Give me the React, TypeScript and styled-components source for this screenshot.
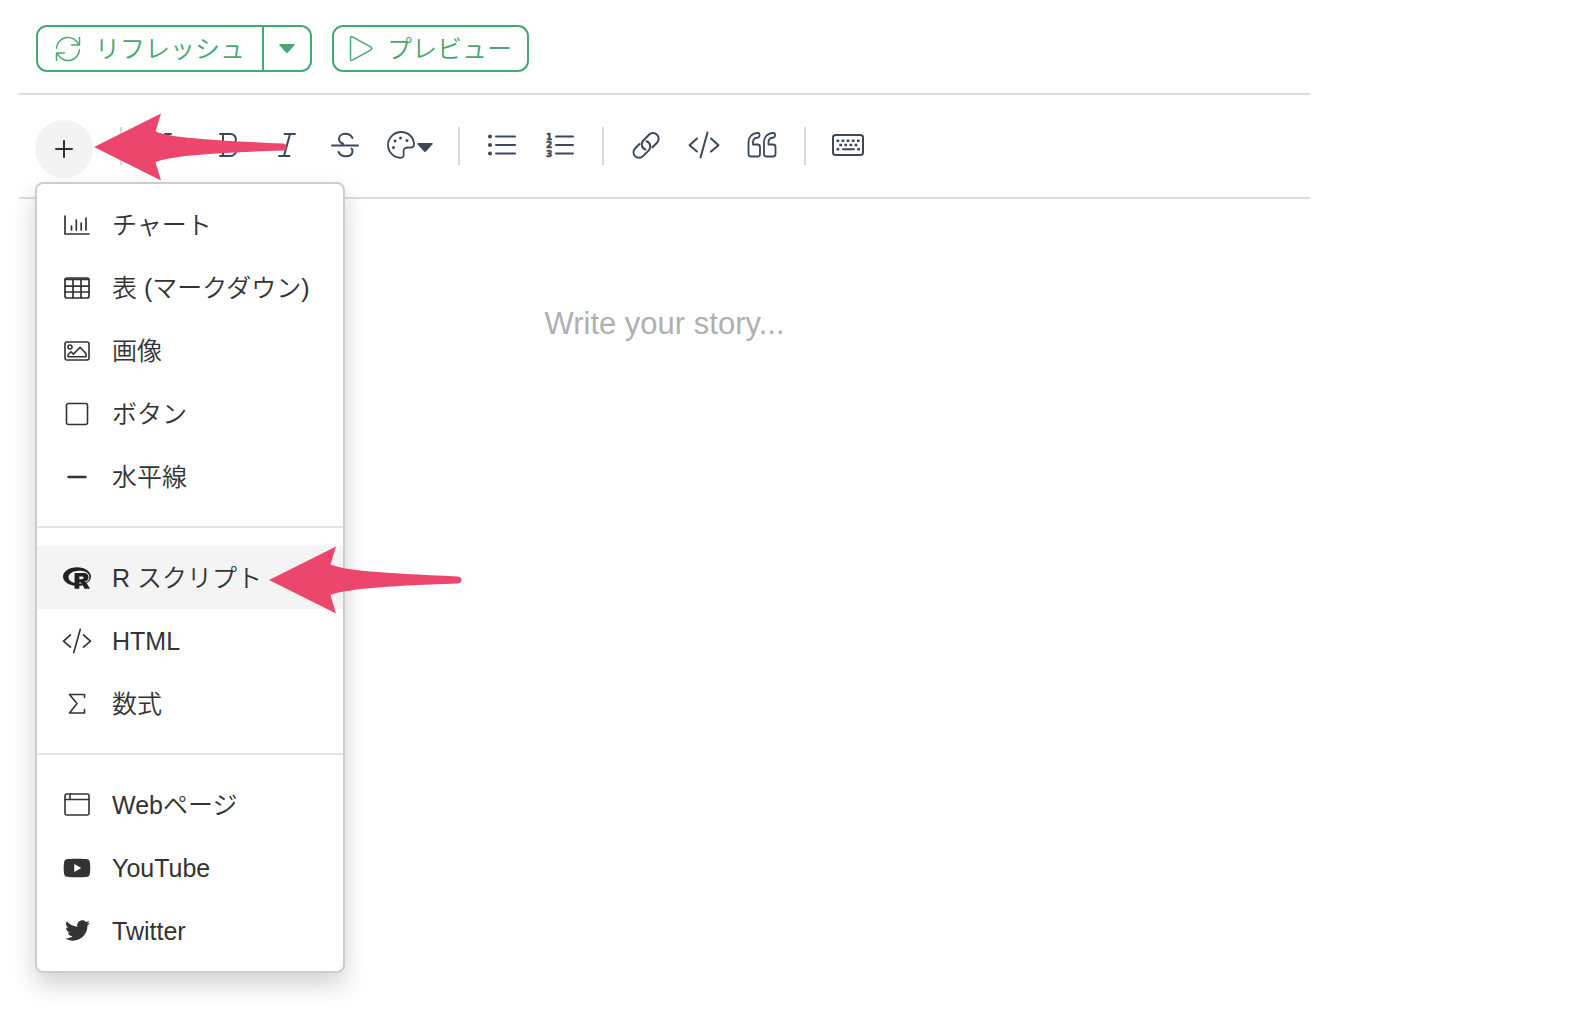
import React from "react";
import styled, { createGlobalStyle } from "styled-components";
import { FaRProject, FaYoutube, FaTwitter } from "react-icons/fa";

const GlobalStyle = createGlobalStyle`
  *, *::before, *::after { box-sizing: border-box; }
  body {
    margin: 0;
    background: #fff;
    color: #333;
    font-family: "Liberation Sans", "Noto Sans CJK JP", sans-serif;
    font-size: 25px;
    font-weight: 350;
  }
  button, textarea { font: inherit; color: inherit; }
`;

const green = "#47a871";
const ink = "#3b485a";
const line = "#dcdcdc";

const Page = styled.main`
  display: flex;
  flex-direction: column;
  min-height: 100vh;
  padding: 0 260px 0 19px;
`;

const Header = styled.header`
  display: flex;
  gap: 20px;
  padding: 25px 17px 21px;
  border-bottom: 2px solid ${line};
`;

const ButtonGroup = styled.div`
  display: flex;
`;

const OutlineButton = styled.button<{ $side?: "left" | "right" }>`
  display: flex;
  align-items: center;
  gap: 14px;
  height: 47px;
  padding: 0 ${(p) => (p.$side === "left" ? 17 : 15)}px;
  border: 2px solid ${green};
  border-left-width: ${(p) => (p.$side === "right" ? 0 : 2)}px;
  border-radius: ${(p) =>
    p.$side === "left" ? "11px 0 0 11px" : p.$side === "right" ? "0 11px 11px 0" : "11px"};
  background: transparent;
  color: ${green};
  line-height: 36px;
  white-space: nowrap;
  cursor: pointer;
`;

const Toolbar = styled.div`
  display: flex;
  align-items: flex-start;
  min-height: 104px;
  padding: 25px 16px 0;
  border-bottom: 2px solid ${line};
`;

const Insert = styled.div`
  position: relative;
  z-index: 2;
  margin-right: 14px;
`;

const InsertButton = styled.button`
  display: flex;
  align-items: center;
  justify-content: center;
  width: 58px;
  height: 58px;
  padding: 0;
  border: 0;
  border-radius: 50%;
  background: #f3f3f3;
  cursor: pointer;
`;

const ToolButton = styled.button`
  display: flex;
  align-items: center;
  justify-content: center;
  flex: none;
  width: 58px;
  height: 50px;
  padding: 0;
  border: 0;
  background: transparent;
  color: ${ink};
  cursor: pointer;
`;

const HeadingButton = styled(ToolButton)`
  width: 65px;
  padding-right: 12px;
`;

const ColorButton = styled(ToolButton)`
  gap: 2px;
  width: 71px;
`;

const CaretDrop = styled.span`
  display: flex;
  padding-top: 4px;
`;

const Separator = styled.span`
  flex: none;
  width: 2px;
  height: 38px;
  margin: 7px 13px 0;
  background: #d9d9d9;
`;

const Menu = styled.div`
  position: absolute;
  top: 62px;
  left: 0;
  width: 310px;
  padding: 9px 0;
  border: 2px solid #cdcdcd;
  border-radius: 8px;
  background: #fff;
  background-clip: padding-box;
  box-shadow: 0 12px 24px rgba(0, 0, 0, 0.175);
`;

const MenuEntry = styled.div`
  position: relative;
`;

const MenuItem = styled.button<{ $active?: boolean }>`
  display: flex;
  align-items: center;
  gap: 19px;
  width: 100%;
  height: 63px;
  padding: 0 24px;
  border: 0;
  background: ${(p) => (p.$active ? "#f4f4f4" : "transparent")};
  line-height: 36px;
  text-align: left;
  white-space: nowrap;
  cursor: pointer;
`;

const MenuIcon = styled.span`
  display: flex;
  align-items: center;
  justify-content: center;
  flex: none;
  width: 32px;
`;

const MenuDivider = styled.hr`
  height: 2px;
  margin: 18px 0;
  border: 0;
  background: #e4e4e4;
`;

const Pointer = styled.svg<{ $left: number; $top: number }>`
  position: absolute;
  left: ${(p) => p.$left}px;
  top: ${(p) => p.$top}px;
  z-index: 3;
  pointer-events: none;
`;

const Editor = styled.textarea`
  display: block;
  flex: 1;
  width: 100%;
  padding: 107px 0 0;
  border: 0;
  outline: 0;
  resize: none;
  background: transparent;
  font-size: 31px;
  line-height: 36px;
  text-align: center;
  &::placeholder { color: #b0b0b0; opacity: 1; }
`;

type IconProps = { w: number; h: number; sw?: number; children: React.ReactNode };
const Icon = ({ w, h, sw = 2, children }: IconProps) => (
  <svg
    width={w}
    height={h}
    viewBox={`0 0 ${w} ${h}`}
    fill="none"
    stroke="currentColor"
    strokeWidth={sw}
    strokeLinecap="round"
    strokeLinejoin="round"
    aria-hidden="true"
  >
    {children}
  </svg>
);

const Caret = () => (
  <svg width="16" height="9" viewBox="0 0 16 9" aria-hidden="true">
    <path d="M1 0h14q1 .5.5 1.200L9 8.500q-1 .8-2 0L.500 1.200Q0 .5 1 0z" fill="currentColor" />
  </svg>
);

const ArrowPointer = ({ left, top }: { left: number; top: number }) => (
  <Pointer $left={left} $top={top} width="194" height="68" viewBox="0 0 194 68" aria-hidden="true">
    <path
      d="M0 34 67 0.500 61.500 18.500C76 24.500 110 27 189 30.500Q192.500 31 192.500 34T189 37.500C110 40 76 43.500 61.500 49L67 67.500z"
      fill="#ec466c"
    />
  </Pointer>
);

const CodeIcon = ({ w = 32, h = 28, sw = 2 }) => (
  <svg width={w} height={h} viewBox="0 0 32 28" fill="none" stroke="currentColor" strokeWidth={sw} strokeLinecap="round" strokeLinejoin="round" aria-hidden="true">
    <path d="M9 7.500 1.500 14.200 9 20.500M23 7.500l7.500 6.700L23 20.500M19.500 1.500 12.500 26.500" />
  </svg>
);

const RefreshIcon = () => (
  <Icon w={26} h={26} sw={1.5}>
    <path d="M1.500 12.200A11.500 11.500 0 0 1 23.600 8.500M24.500 1.500v7.500h-8M24.500 13.800A11.500 11.500 0 0 1 2.400 17.500M1.500 24.500V17h8" />
  </Icon>
);

const PlayIcon = () => (
  <Icon w={24} h={27} sw={1.5}>
    <path d="M1.500 3v21q0 2.200 2 1.200L22 14.800q1.500-1.300 0-2.600L3.500 1.800Q1.500.8 1.500 3z" />
  </Icon>
);

const PlusIcon = () => (
  <Icon w={20} h={20}>
    <path d="M10 2v16M2 10h16" />
  </Icon>
);

const HeadingIcon = () => (
  <Icon w={20} h={26}>
    <path d="M1 2h6M13 2h6M1 24h6M13 24h6M4 2v22M16 2v22M4 13h12" />
  </Icon>
);

const BoldIcon = () => (
  <Icon w={20} h={26}>
    <path d="M1 2h10.500a5.300 5.300 0 0 1 0 10.800H4M11.500 12.800a5.600 5.600 0 0 1 0 11.200H1M4 2v22" />
  </Icon>
);

const ItalicIcon = () => (
  <Icon w={20} h={26}>
    <path d="M7.500 2H18M2 24h10.500M13 2 7 24" />
  </Icon>
);

const StrikeIcon = () => (
  <Icon w={28} h={26}>
    <path d="M1 13.500h26M21.500 6C20 3 17.500 1.800 14.500 1.800 10.500 1.800 8 4 8 7c0 2.600 1.500 3.800 4 4.800M7.500 20c1.500 3 4 4.200 7 4.200 4 0 7-1.700 7-5q0-2-1-2.700" />
  </Icon>
);

const PaletteIcon = () => (
  <Icon w={28} h={28} sw={1.8}>
    <path d="M14 1C7 1 1 7 1 14s5.500 12.500 12.300 12.900c2.900.1 4-2.200 3.300-4.700-.9-3.700 1.200-5.900 4.600-5.700 3.600.3 5.800-.2 5.800-3.300C26.800 6.300 21.300 1 14 1z" />
    <g fill="currentColor" stroke="none">
      <circle cx="6.500" cy="16.500" r="1.500" />
      <circle cx="8" cy="10" r="1.500" />
      <circle cx="13.500" cy="7" r="1.500" />
      <circle cx="20" cy="9.500" r="1.500" />
    </g>
  </Icon>
);

const BulletsIcon = () => (
  <Icon w={28} h={24}>
    <path d="M8 3.500h19M8 12h19M8 20.500h19" />
    <g fill="currentColor" stroke="none">
      <circle cx="2" cy="3.500" r="2" />
      <circle cx="2" cy="12" r="2" />
      <circle cx="2" cy="20.500" r="2" />
    </g>
  </Icon>
);

const NumbersIcon = () => (
  <Icon w={28} h={26}>
    <path d="M10 4.500h17M10 13h17M10 21.500h17" />
    <g fill="currentColor" strokeWidth="0.500" fontFamily="DejaVu Sans" fontWeight="700" fontSize="9">
      <text x="0" y="8">1</text>
      <text x="0" y="16">2</text>
      <text x="0" y="25">3</text>
    </g>
  </Icon>
);

const LinkIcon = () => (
  <Icon w={28} h={28}>
    <path d="M7.500 13 3 17.500a5.700 5.700 0 0 0 0 7.600a5.700 5.700 0 0 0 8 0l5.500-5.500c3-3 2-8-2-9.300" />
    <path d="M20.500 16.200l4.500-4.500a5.700 5.700 0 0 0 0-8a5.700 5.700 0 0 0-8 0l-5.500 5.500c-3 3-2 8 2 9.300" />
  </Icon>
);

const QuoteIcon = () => (
  <Icon w={30} h={26} sw={1.8}>
    <path d="M12.500 3.500V2.200Q12.300 1 11 1C5 1 1.500 5 1.500 10v12q0 2.500 2.500 2.500h6.500q2.500 0 2.500-2.500v-7q0-2.500-2.500-2.500H6V10c0-2.500 2-4.200 5-4.500q1.500-.3 1.500-2z" />
    <path d="M28 3.500V2.200Q27.800 1 26.500 1C20.500 1 17 5 17 10v12q0 2.500 2.500 2.500H26q2.500 0 2.500-2.500v-7q0-2.500-2.500-2.500h-4.500V10c0-2.500 2-4.200 5-4.500q1.500-.3 1.500-2z" />
  </Icon>
);

const KeyboardIcon = () => (
  <Icon w={32} h={22}>
    <rect x="1" y="1" width="30" height="20" rx="2.500" />
    <g strokeLinecap="butt" strokeWidth="2.500">
      <path d="M4.500 6.800h23.500" strokeDasharray="2.700 2.400" />
      <path d="M7.300 11h18" strokeDasharray="2.700 2.400" />
      <path d="M4.500 15.300h2.700M25.200 15.300h2.700" />
    </g>
    <path d="M11 15.300h11" />
  </Icon>
);

const ChartIcon = () => (
  <Icon w={26} h={20} sw={1.7}>
    <path d="M1 1v18h24M7.500 11v4M12.300 5v10M17.200 8v7M22 3v12" />
  </Icon>
);

const TableIcon = () => (
  <Icon w={26} h={22} sw={1.7}>
    <rect x="1" y="1" width="24" height="20" rx="2" />
    <path d="M1 2.300h24M1 9.200h24M1 15h24M9 2v19M17 2v19" />
  </Icon>
);

const ImageIcon = () => (
  <Icon w={26} h={20} sw={1.6}>
    <rect x="1" y="1" width="24" height="18" rx="2" />
    <circle cx="6" cy="6" r="2" />
    <path d="M4 15.800v-2l3-3 2.500 2.300 6.500-6.800 3 3 3 3.500v3z" />
  </Icon>
);

const SquareIcon = () => (
  <Icon w={24} h={24} sw={1.6}>
    <rect x="1.500" y="1.500" width="21" height="21" rx="2" />
  </Icon>
);

const MinusIcon = () => (
  <Icon w={20} h={4} sw={2.4}>
    <path d="M1.500 2h17" />
  </Icon>
);

const SigmaIcon = () => (
  <Icon w={18} h={22} sw={1.6}>
    <path d="M16.500 4.500V1.500H1.500L9 10.500 1.500 20h15v-3.500" />
  </Icon>
);

const WindowIcon = () => (
  <Icon w={26} h={23} sw={1.6}>
    <rect x="1" y="1" width="24" height="21" rx="2" />
    <path d="M1 6.500h24M6 1v5" />
  </Icon>
);

type Item = { label: string; icon: React.ReactNode; active?: boolean };

const groups: Item[][] = [
  [
    { label: "チャート", icon: <ChartIcon /> },
    { label: "表 (マークダウン)", icon: <TableIcon /> },
    { label: "画像", icon: <ImageIcon /> },
    { label: "ボタン", icon: <SquareIcon /> },
    { label: "水平線", icon: <MinusIcon /> },
  ],
  [
    { label: "R スクリプト", icon: <FaRProject size={28} color="#222" />, active: true },
    { label: "HTML", icon: <CodeIcon w={30} h={26} sw={1.8} /> },
    { label: "数式", icon: <SigmaIcon /> },
  ],
  [
    { label: "Webページ", icon: <WindowIcon /> },
    { label: "YouTube", icon: <FaYoutube size={28} /> },
    { label: "Twitter", icon: <FaTwitter size={25} /> },
  ],
];

export default function App() {
  return (
    <>
      <GlobalStyle />
      <Page>
        <Header>
          <ButtonGroup>
            <OutlineButton type="button" $side="left">
              <RefreshIcon />
              リフレッシュ
            </OutlineButton>
            <OutlineButton type="button" $side="right" aria-label="リフレッシュのオプション">
              <Caret />
            </OutlineButton>
          </ButtonGroup>
          <OutlineButton type="button">
            <PlayIcon />
            プレビュー
          </OutlineButton>
        </Header>

        <Toolbar role="toolbar">
          <Insert>
            <InsertButton type="button" aria-label="挿入" aria-haspopup="menu" aria-expanded="true">
              <PlusIcon />
            </InsertButton>
            <ArrowPointer left={59} top={-7} />
            <Menu role="menu">
              {groups.map((items, g) => (
                <React.Fragment key={g}>
                  {g > 0 && <MenuDivider />}
                  {items.map((item) => (
                    <MenuEntry key={item.label}>
                      <MenuItem type="button" role="menuitem" $active={item.active}>
                        <MenuIcon>{item.icon}</MenuIcon>
                        {item.label}
                      </MenuItem>
                      {item.active && <ArrowPointer left={232} top={0} />}
                    </MenuEntry>
                  ))}
                </React.Fragment>
              ))}
            </Menu>
          </Insert>
          <Separator />
          <HeadingButton type="button" aria-label="見出し"><HeadingIcon /></HeadingButton>
          <ToolButton type="button" aria-label="太字"><BoldIcon /></ToolButton>
          <ToolButton type="button" aria-label="斜体"><ItalicIcon /></ToolButton>
          <ToolButton type="button" aria-label="取り消し線"><StrikeIcon /></ToolButton>
          <ColorButton type="button" aria-label="文字色">
            <PaletteIcon />
            <CaretDrop><Caret /></CaretDrop>
          </ColorButton>
          <Separator />
          <ToolButton type="button" aria-label="箇条書き"><BulletsIcon /></ToolButton>
          <ToolButton type="button" aria-label="番号付きリスト"><NumbersIcon /></ToolButton>
          <Separator />
          <ToolButton type="button" aria-label="リンク"><LinkIcon /></ToolButton>
          <ToolButton type="button" aria-label="コード"><CodeIcon /></ToolButton>
          <ToolButton type="button" aria-label="引用"><QuoteIcon /></ToolButton>
          <Separator />
          <ToolButton type="button" aria-label="キーボード"><KeyboardIcon /></ToolButton>
        </Toolbar>

        <Editor aria-label="本文" placeholder="Write your story..." />
      </Page>
    </>
  );
}
